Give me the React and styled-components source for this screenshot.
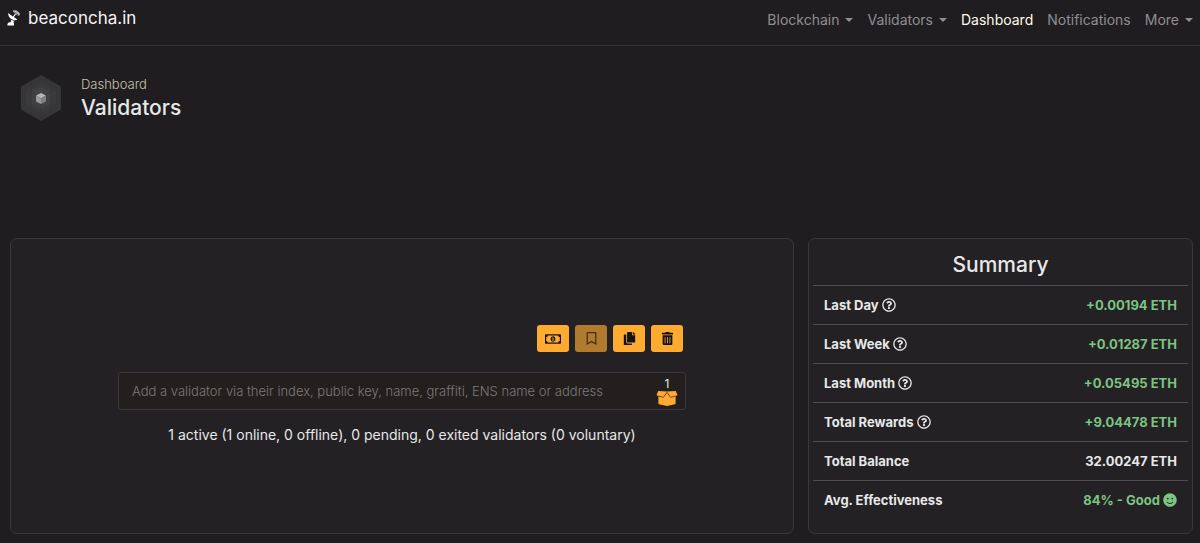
import React from "react";
import styled, { createGlobalStyle } from "styled-components";
import {
  FaCopy,
  FaRegBookmark,
  FaRegMoneyBillAlt,
  FaRegQuestionCircle,
  FaSmile,
  FaTrashAlt,
} from "react-icons/fa";

const NAV = [
  { label: "Blockchain", menu: true },
  { label: "Validators", menu: true },
  { label: "Dashboard", active: true },
  { label: "Notifications" },
  { label: "More", menu: true },
];

const SUMMARY = [
  { label: "Last Day", help: true, value: "+0.00194 ETH", good: true },
  { label: "Last Week", help: true, value: "+0.01287 ETH", good: true },
  { label: "Last Month", help: true, value: "+0.05495 ETH", good: true },
  { label: "Total Rewards", help: true, value: "+9.04478 ETH", good: true },
  { label: "Total Balance", value: "32.00247 ETH" },
  { label: "Avg. Effectiveness", value: "84% - Good", good: true, smile: true },
];

const ACTIONS = [
  { label: "Show earnings", Icon: FaRegMoneyBillAlt, wide: true },
  { label: "Save to watchlist", Icon: FaRegBookmark, disabled: true },
  { label: "Copy link", Icon: FaCopy },
  { label: "Remove all", Icon: FaTrashAlt },
];

function Dish() {
  return (
    <svg width="14" height="18" viewBox="0 0 14 18" aria-hidden="true">
      <path
        d="M1.2 4C1 7 2.8 9.6 5.2 10.6 6.8 11.4 8.8 11.4 10.4 10.6L6.8 8 9 5.4 8.2 4.8 5.8 7.4Z"
        fill="#fff"
      />
      <path d="M3.8 10.4C5.2 11.4 6.4 11.8 7.6 11.8L6.4 13.2 7 14.4V16.4H0.4V15L1.6 13.6 4 13Z" fill="#fff" />
      <path d="M5.8 1.6C9 0.2 12.8 2.6 13 6L11.4 7C10.8 4.6 8.8 3 6.2 3.2Z" fill="#a5a5a5" />
      <path d="M7 3.4 10.8 6.4M8.4 1.8 9.4 4.6 12.6 4.2" stroke="#d8d8d8" strokeWidth="0.6" fill="none" />
    </svg>
  );
}

function Cube() {
  return (
    <svg width="42" height="46" viewBox="0 0 42 46" aria-hidden="true">
      <path d="M21 0 41 11.5V34.5L21 46 1 34.5V11.5Z" fill="#363537" />
      <path d="M21 6 36 14.5V31.5L21 40 6 31.5V14.5Z" fill="#3b3a3c" />
      <path d="M21 12 31 17.5V28.5L21 34 11 28.5V17.5Z" fill="#414042" />
      <path
        d="M1 19 21 7.5 41 19M1 27 21 38.5 41 27M11 6V40M31 6V40M1 11.5 21 23 41 11.5M21 23V46"
        stroke="#323133"
        strokeWidth="0.6"
        fill="none"
      />
      <path d="M21 18 26 20.5 21 23.5 16 20.5Z" fill="#b5b5b5" />
      <path d="M16 20.5 21 23.5V29L16 26.5Z" fill="#9a9a9a" />
      <path d="M26 20.5 21 23.5V29L26 26.5Z" fill="#808080" />
    </svg>
  );
}

function OpenBox() {
  return (
    <svg width="22" height="16" viewBox="0 0 22 16" aria-hidden="true">
      <path d="M2.4 2H19.6V13.4Q19.6 14 19 14.2L11 16 3 14.2Q2.4 14 2.4 13.4Z" fill="#ffaa31" />
      <path
        d="M2.2 1 11 1.6 19.8 1 21.4 4.8Q21.6 5.4 21 5.6L15.4 7.2Q14.6 7.4 14.2 6.8L11 2.4 7.8 6.8Q7.4 7.4 6.6 7.2L1 5.6Q0.4 5.4 0.6 4.8Z"
        fill="#ffaa31"
      />
      <path
        d="M2.4 6 6.6 7.2Q7.4 7.4 7.8 6.8L11 2.4 14.2 6.8Q14.6 7.4 15.4 7.2L19.6 6"
        fill="none"
        stroke="#5c3b10"
        strokeWidth="0.9"
      />
    </svg>
  );
}

function SummaryRow({ row }) {
  return (
    <tr>
      <th scope="row">
        {row.label} {row.help && <FaRegQuestionCircle />}
      </th>
      <Value $good={row.good}>
        {row.value} {row.smile && <FaSmile />}
      </Value>
    </tr>
  );
}

function App() {
  return (
    <>
      <GlobalStyle />
      <Header>
        <Brand href="#">
          <Dish />
          beaconcha.in
        </Brand>
        <Nav>
          {NAV.map((item) => (
            <NavLink key={item.label} href="#" $active={item.active}>
              {item.label}
              {item.menu && <Caret />}
            </NavLink>
          ))}
        </Nav>
      </Header>
      <main>
        <Title>
          <Cube />
          <div>
            <Crumb>Dashboard</Crumb>
            <h1>Validators</h1>
          </div>
        </Title>
        <Panels>
          <Card>
            <Selector>
              <Actions>
                {ACTIONS.map(({ label, Icon, disabled, wide }) => (
                  <Action
                    key={label}
                    aria-label={label}
                    disabled={disabled}
                    $wide={wide}
                  >
                    <Icon />
                  </Action>
                ))}
              </Actions>
              <Field>
                <input
                  type="text"
                  aria-label="Add a validator"
                  placeholder="Add a validator via their index, public key, name, graffiti, ENS name or address"
                />
                <Selected aria-label="Selected validators">
                  <span>1</span>
                  <OpenBox />
                </Selected>
              </Field>
              <Status>
                1 active (1 online, 0 offline), 0 pending, 0 exited validators
                (0 voluntary)
              </Status>
            </Selector>
          </Card>
          <Card $summary>
            <h2>Summary</h2>
            <Table>
              <tbody>
                {SUMMARY.map((row) => (
                  <SummaryRow key={row.label} row={row} />
                ))}
              </tbody>
            </Table>
          </Card>
        </Panels>
      </main>
    </>
  );
}

const GlobalStyle = createGlobalStyle`
  * {
    box-sizing: border-box;
  }

  body {
    margin: 0;
    background: #1f1d20;
    color: #e8e8e8;
    font-family: Inter, "Liberation Sans", sans-serif;
    font-size: 14px;
  }

  h1, h2 {
    margin: 0;
    font-size: 21px;
    font-weight: 500;
    line-height: 28px;
  }
`;

const Header = styled.header`
  display: flex;
  justify-content: space-between;
  align-items: flex-start;
  height: 46px;
  padding: 8px 7px 0;
  border-bottom: solid 1px #343336;
`;

const Brand = styled.a`
  display: flex;
  align-items: center;
  gap: 7px;
  color: #f5f5f5;
  font-size: 17px;
  line-height: 20px;
  text-decoration: none;
`;

const Nav = styled.nav`
  display: flex;
  gap: 14px;
`;

const NavLink = styled.a`
  display: flex;
  align-items: center;
  gap: 6px;
  color: ${({ $active }) => ($active ? "#fffbea" : "#8f8e90")};
  line-height: 24px;
  text-decoration: none;
`;

const Caret = styled.span`
  border: solid 4px transparent;
  border-top-color: currentColor;
  border-bottom: 0;
`;

const Title = styled.div`
  display: flex;
  align-items: center;
  gap: 19px;
  margin: 28px 20px 116px;
`;

const Crumb = styled.div`
  color: #c6c3a8;
  font-size: 13px;
  font-weight: 300;
  line-height: 20px;
`;

const Panels = styled.div`
  display: grid;
  grid-template-columns: 784fr 385fr;
  gap: 14px;
  padding: 0 7px 9px 10px;
`;

const Card = styled.section`
  display: flex;
  flex-direction: column;
  align-items: center;
  justify-content: ${({ $summary }) => ($summary ? "flex-start" : "center")};
  padding: ${({ $summary }) => ($summary ? "0 4px 13px" : "0 16px")};
  border: solid 1px #39383b;
  border-radius: 7px;
  background: #232124;

  h2 {
    padding: 12px 0 6px;
  }
`;

const Selector = styled.div`
  display: flex;
  flex-direction: column;
  width: 100%;
  max-width: 568px;
`;

const Actions = styled.div`
  display: flex;
  justify-content: flex-end;
  gap: 6px;
  padding-right: 3px;
  margin-bottom: 20px;
`;

const Action = styled.button`
  display: flex;
  align-items: center;
  justify-content: center;
  width: 32px;
  height: 27px;
  padding: 0;
  border: 0;
  border-radius: 3px;
  background: #ffaa31;
  color: #141414;
  font-size: ${({ $wide }) => ($wide ? "16px" : "13px")};
  cursor: pointer;

  &:disabled {
    background: #b07b2e;
    color: #3f2c14;
  }
`;

const Field = styled.div`
  display: flex;
  height: 38px;
  border: solid 1px #39383a;
  border-radius: 3px;
  background: #231f1e;

  input {
    flex: 1;
    min-width: 0;
    padding: 0 13px;
    border: 0;
    outline: 0;
    background: transparent;
    color: #e8e8e8;
    font-family: inherit;
    font-size: 13px;
    font-weight: 300;
  }

  input::placeholder {
    color: #7c7978;
  }
`;

const Selected = styled.button`
  display: flex;
  flex-direction: column;
  align-items: center;
  padding: 4px 7px 0;
  border: 0;
  background: transparent;
  font-family: inherit;
  cursor: pointer;

  span {
    color: #e8e8e8;
    font-size: 12px;
    line-height: 13px;
  }
`;

const Status = styled.div`
  padding-top: 14px;
  line-height: 22px;
  text-align: center;
`;

const Table = styled.table`
  width: 100%;
  border-collapse: collapse;

  th,
  td {
    height: 39px;
    padding: 0 11px;
    border-top: solid 1px #504e51;
    font-size: 13px;
    font-weight: 700;
    text-align: left;
  }

  svg {
    width: 14px;
    height: 14px;
    vertical-align: -2px;
  }
`;

const Value = styled.td`
  && {
    color: ${({ $good }) => ($good ? "#7dc382" : "#e8e8e8")};
    text-align: right;
  }
`;

export default App;
